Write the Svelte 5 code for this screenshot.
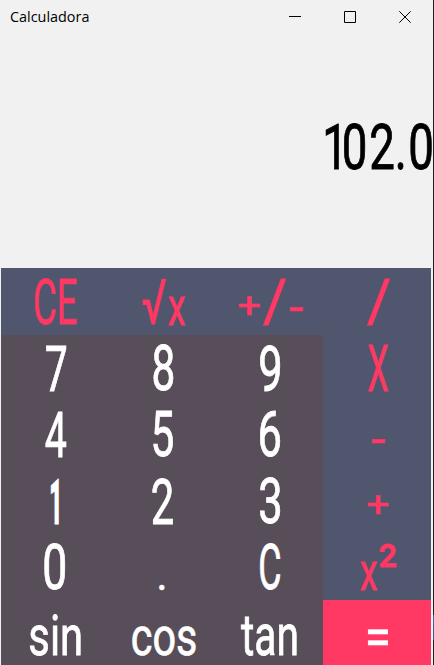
<script>
  // Each glyph run: text, then the ink box it fills inside its key (left, right, top, bottom),
  // and optionally a font weight.
  const rows = [
    { h: 67, keys: [
      { kind: 'op', runs: [['CE', 34, 76, 11, 57]] },
      { kind: 'op', runs: [['√', 34, 57, 11, 57], ['x', 59.5, 76, 28, 57]] },
      { kind: 'op', runs: [['+', 22.5, 43.5, 27, 46], ['/', 47, 70, 11, 57], ['-', 74, 87, 38, 42]] },
      { kind: 'op', runs: [['/', 44, 67, 11, 57]] },
    ] },
    { h: 66, keys: [
      { kind: 'num', runs: [['7', 45, 65, 10, 56]] },
      { kind: 'num', runs: [['8', 44.5, 64, 10, 56]] },
      { kind: 'num', runs: [['9', 44, 64, 10, 56]] },
      { kind: 'op', runs: [['X', 45, 65, 10, 56]] },
    ] },
    { h: 66, keys: [
      { kind: 'num', runs: [['4', 44.5, 65, 10, 56]] },
      { kind: 'num', runs: [['5', 44.5, 64, 10, 56]] },
      { kind: 'num', runs: [['6', 44, 64, 10, 56]] },
      { kind: 'op', runs: [['-', 49, 62, 37, 41]] },
    ] },
    { h: 67, keys: [
      { kind: 'num', runs: [['1', 50, 57.5, 11, 57, 900]] },
      { kind: 'num', runs: [['2', 43.5, 64, 11, 57]] },
      { kind: 'num', runs: [['3', 44, 64, 11, 57]] },
      { kind: 'op', runs: [['+', 44.5, 65, 27, 46]] },
    ] },
    { h: 66, keys: [
      { kind: 'num', runs: [['0', 43.5, 64, 10, 56]] },
      { kind: 'num', runs: [['.', 50.5, 55.5, 51, 56]] },
      { kind: 'num', runs: [['C', 44, 64, 10, 56]] },
      { kind: 'op', runs: [['x', 37.5, 54, 27, 56], ['²', 57, 73.5, 10, 33]] },
    ] },
    { h: 65, keys: [
      { kind: 'num', runs: [['sin', 29, 79.5, 15, 56]] },
      { kind: 'num', runs: [['cos', 23.5, 86.5, 27, 56]] },
      { kind: 'num', runs: [['tan', 25, 80.5, 18, 56]] },
      { kind: 'eq', runs: [['=', 45, 65, 30, 45]] },
    ] },
  ];

  // Display digits, each with the left edge of its ink.
  const display = { text: '102.0', lefts: [326, 344, 371, 398, 410.5], top: 124, bottom: 170, zeroWidth: 21 };

  const ctx = document.createElement('canvas').getContext('2d');

  function measure(text, weight = 400) {
    ctx.font = `${weight} 100px Roboto`;
    return ctx.measureText(text);
  }

  function fit([text, l, r, t, b, weight]) {
    const m = measure(text, weight);
    const sx = (r - l) / (m.actualBoundingBoxLeft + m.actualBoundingBoxRight);
    const sy = (b - t) / (m.actualBoundingBoxAscent + m.actualBoundingBoxDescent);
    const x = l + m.actualBoundingBoxLeft * sx;
    const y = t + m.actualBoundingBoxAscent * sy;
    return `matrix(${sx} 0 0 ${sy} ${x} ${y})`;
  }

  const zero = measure('0');
  const dsx = display.zeroWidth / (zero.actualBoundingBoxLeft + zero.actualBoundingBoxRight);
  const dsy = (display.bottom - display.top) / (zero.actualBoundingBoxAscent + zero.actualBoundingBoxDescent);
  const displayTransform = `matrix(${dsx} 0 0 ${dsy} 0 ${display.top + zero.actualBoundingBoxAscent * dsy})`;
  const displayXs = display.lefts
    .map((left, i) => left / dsx + measure(display.text[i]).actualBoundingBoxLeft)
    .join(' ');
</script>

<div class="window">
  <header>
    <h1>Calculadora</h1>
    <div class="controls">
      <svg width="12" height="12" viewBox="0 0 12 12"><path d="M0 5.5H12" /></svg>
      <svg width="12" height="12" viewBox="0 0 12 12"><path d="M.5 .5H11.5V11.5H.5Z" /></svg>
      <svg width="12" height="12" viewBox="0 0 12 12"><path d="M.3 .3L11.7 11.7M11.7 .3L.3 11.7" /></svg>
    </div>
  </header>
  <svg class="display" width="433" height="235" viewBox="0 33 433 235">
    <text transform={displayTransform} x={displayXs}>{display.text}</text>
  </svg>
  <main>
    {#each rows as row}
      <div class="row" style="height: {row.h}px">
        {#each row.keys as key}
          <button class={key.kind}>
            <svg width="107" height={row.h}>
              {#each key.runs as run}
                <text transform={fit(run)} font-weight={run[5] ?? 400}>{run[0]}</text>
              {/each}
            </svg>
          </button>
        {/each}
      </div>
    {/each}
  </main>
</div>

<style>
  .window {
    box-sizing: border-box;
    width: 434px;
    height: 665px;
    overflow: hidden;
    background:
      linear-gradient(#222 615px, #46639c 615px, #3c5585 640px, #222 640px) right / 1px 100% no-repeat,
      #f1f1f1;
  }
  header {
    height: 33px;
    box-sizing: border-box;
    padding: 0 23px 0 10px;
    display: flex;
    justify-content: space-between;
    align-items: center;
  }
  h1 {
    margin: 0;
    font: 400 14.4px/32px "Open Sans", "Noto Sans", sans-serif;
    color: #000;
  }
  .controls {
    display: flex;
    gap: 43px;
  }
  .controls path {
    fill: none;
    stroke: #000;
    stroke-width: 1;
  }
  svg {
    display: block;
    overflow: visible;
  }
  text {
    font-family: Roboto, sans-serif;
    font-size: 100px;
    stroke: #000;
    stroke-width: 1.4px;
  }
  main {
    width: 430px;
    margin-left: 1px;
  }
  .row {
    display: grid;
    grid-template-columns: 108px 107px 107px 108px;
  }
  button {
    display: block;
    border: 0;
    padding: 0;
    margin: 0;
    background: #584e59;
    fill: #fff;
  }
  button text {
    stroke: #fff;
  }
  .op {
    background: #4f566d;
    fill: #ff3864;
  }
  .op text {
    stroke: #ff3864;
  }
  .eq {
    background: #ff3864;
  }
</style>
